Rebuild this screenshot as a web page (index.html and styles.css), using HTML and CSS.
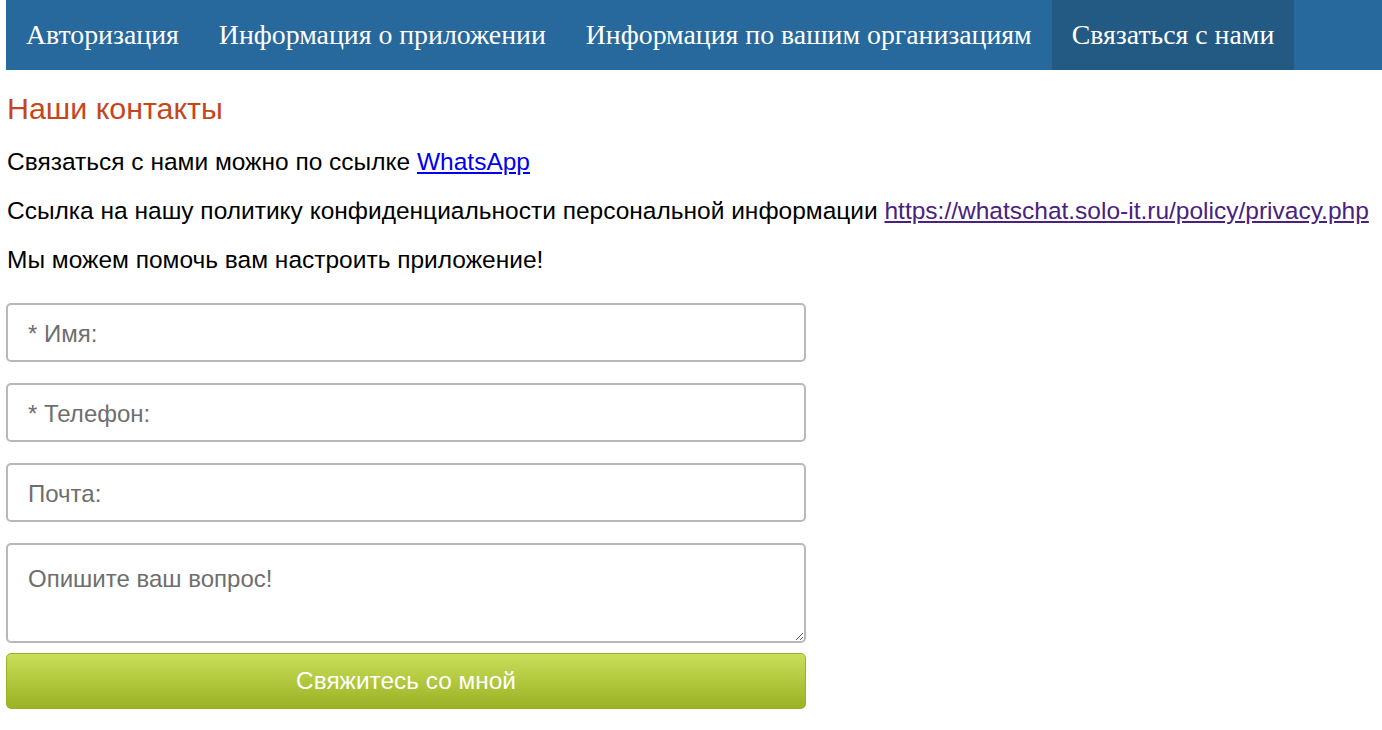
FILE: index.html
```html
<!DOCTYPE html>
<html lang="ru">
<head>
<meta charset="utf-8">
<title>Связаться с нами</title>
<link rel="stylesheet" href="styles.css">
</head>
<body>
<nav class="nav">
  <a class="nav-item" href="#">Авторизация</a>
  <a class="nav-item" href="#">Информация о приложении</a>
  <a class="nav-item" href="#">Информация по вашим организациям</a>
  <a class="nav-item active" href="#">Связаться с нами</a>
</nav>
<main class="content">
  <h2 class="title">Наши контакты</h2>
  <p class="text">Связаться с нами можно по ссылке <a class="link" href="#">WhatsApp</a></p>
  <p class="text">Ссылка на нашу политику конфиденциальности персональной информации <a class="link visited" href="#">https://whatschat.solo-it.ru/policy/privacy.php</a></p>
  <p class="text">Мы можем помочь вам настроить приложение!</p>
  <form class="form">
    <input class="field" type="text" placeholder="* Имя:">
    <input class="field" type="text" placeholder="* Телефон:">
    <input class="field" type="text" placeholder="Почта:">
    <textarea class="field area" placeholder="Опишите ваш вопрос!"></textarea>
    <button class="submit" type="button">Свяжитесь со мной</button>
  </form>
</main>
</body>
</html>
```
FILE: styles.css
```css
html, body {
  margin: 0;
  padding: 0;
  background: #fff;
}
body {
  padding: 0 0 0 6px;
  font-family: "Liberation Sans", Arial, sans-serif;
}
.nav {
  display: flex;
  height: 70px;
  background: #27699c;
}
.nav-item {
  display: flex;
  align-items: center;
  padding: 0 20px;
  color: #fff;
  text-decoration: none;
  font-family: "Liberation Serif", "Times New Roman", serif;
  font-size: 27.8px;
}
.nav-item.active {
  background: #225a84;
}
.content {
  padding-left: 1px;
}
.title {
  margin: 22px 0 0;
  font-weight: normal;
  font-size: 30.4px;
  line-height: 32px;
  color: #c5461b;
}
.text {
  margin: 16px 0 0;
  font-size: 24.5px;
  line-height: 33px;
  color: #000;
}
.title + .text {
  margin-top: 21px;
}
.link {
  color: #0000ee;
}
.link.visited {
  color: #4a2180;
}
.form {
  display: flex;
  flex-direction: column;
  width: 800px;
  margin: 27px 0 0 -1px;
}
.field {
  box-sizing: border-box;
  width: 800px;
  height: 59px;
  margin: 0 0 21px;
  padding: 2px 20px 0;
  border: 2px solid #b8b8b8;
  border-radius: 5px;
  font-family: "Liberation Sans", Arial, sans-serif;
  font-size: 24px;
  color: #333;
  background: #fff;
  outline: none;
}
.field::placeholder {
  color: #6e6e6e;
}
.area {
  height: 100px;
  margin-bottom: 10px;
  padding: 20px;
  resize: vertical;
}
.submit {
  width: 800px;
  height: 56px;
  border: 1px solid #9bb025;
  border-radius: 5px;
  background: linear-gradient(to bottom, #c9de5a, #9ab223);
  color: #fff;
  font-family: "Liberation Sans", Arial, sans-serif;
  font-size: 24.4px;
  cursor: pointer;
}
```
